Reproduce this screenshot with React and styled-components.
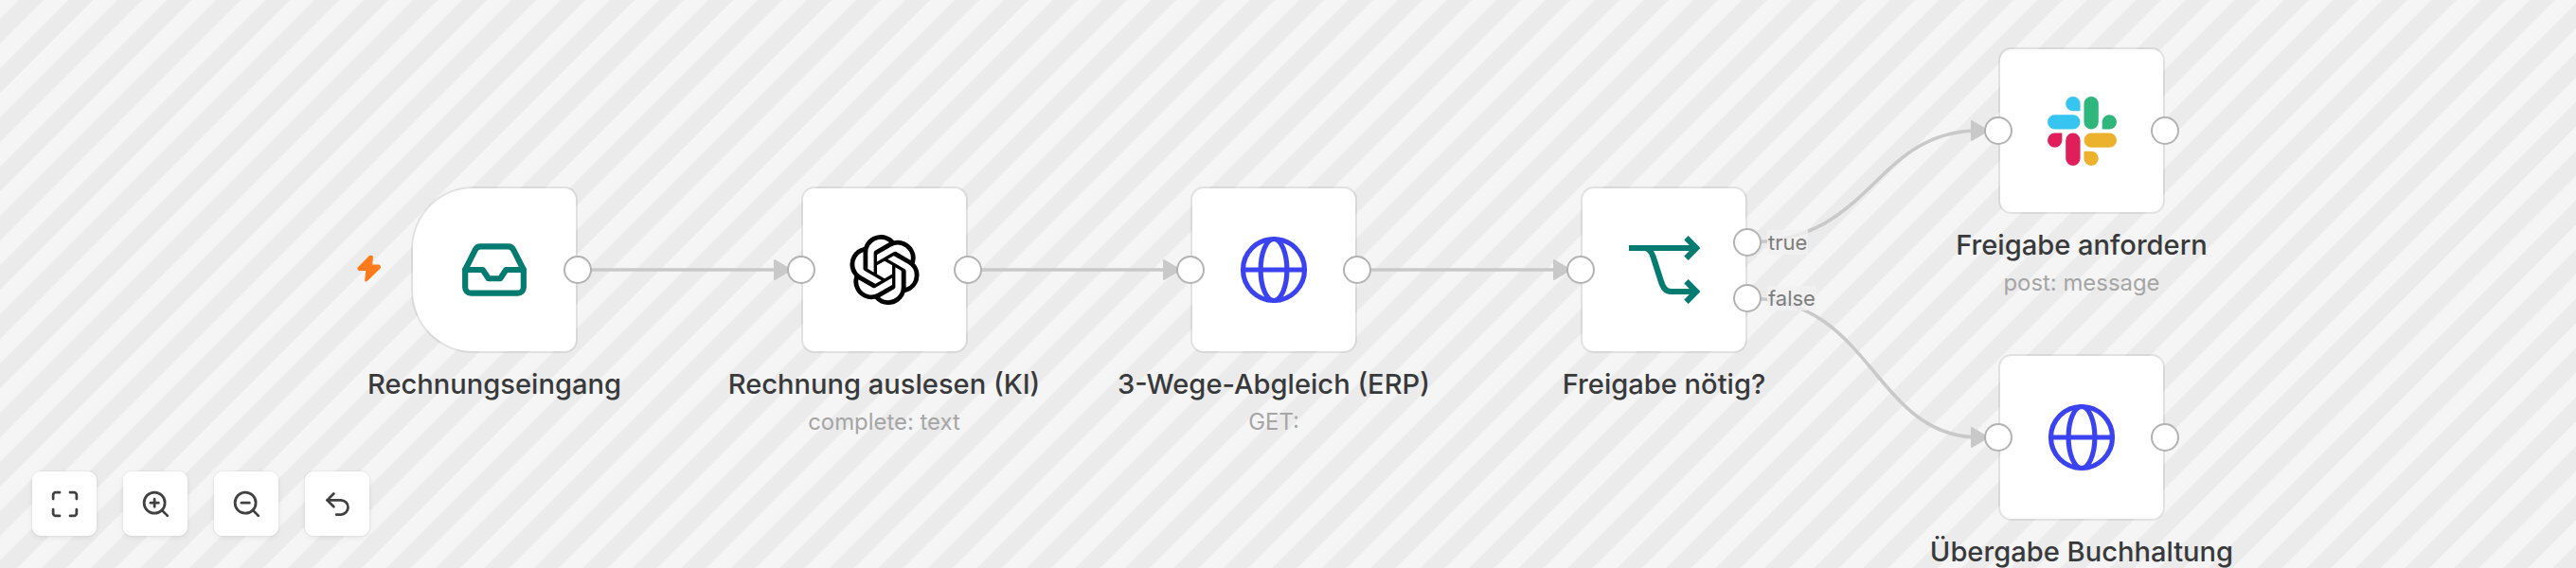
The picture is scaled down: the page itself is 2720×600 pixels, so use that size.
import React from "react";
import styled, { createGlobalStyle } from "styled-components";
import { SiOpenai } from "react-icons/si";
import { Maximize, ZoomIn, ZoomOut, Undo2, Inbox } from "lucide-react";

const GlobalStyle = createGlobalStyle`
  * { box-sizing: border-box; }
  body {
    margin: 0;
    font-family: Inter, "Liberation Sans", sans-serif;
    overflow: hidden;
  }
`;

const Canvas = styled.div`
  position: relative;
  width: 2720px;
  height: 600px;
  overflow: hidden;
  display: flex;
  align-items: flex-end;
  background: #f5f5f5;
`;

const Stripes = styled.svg`
  position: absolute;
  inset: 0;
  width: 2720px;
  height: 600px;
`;

const NodeBox = styled.div`
  position: absolute;
  left: ${(p) => p.$x}px;
  top: ${(p) => p.$y}px;
  width: 176px;
  height: 176px;
  display: flex;
  align-items: center;
  justify-content: center;
  background: white;
  background-clip: padding-box;
  border: 2px solid rgba(0, 0, 0, 0.08);
  border-radius: ${(p) => (p.$trigger ? "66px 14px 14px 66px" : "14px")};
`;

const Handle = styled.span`
  position: absolute;
  left: ${(p) => (p.$side === "left" ? "-17px" : "159px")};
  top: ${(p) => p.$y - 17}px;
  width: 30px;
  height: 30px;
  border: 2px solid #b2b2b2;
  border-radius: 50%;
  background: white;
`;

const Caption = styled.div`
  position: absolute;
  top: 189.5px;
  left: 50%;
  transform: translateX(-50%);
  display: flex;
  flex-direction: column;
  align-items: center;
  gap: 9px;
  white-space: nowrap;
`;

const Title = styled.div`
  font-size: 29.1px;
  line-height: 34px;
  font-weight: 500;
  color: #38393b;
`;

const Subtitle = styled.div`
  font-size: 23.9px;
  line-height: 28px;
  color: #a5a5a5;
`;

const Bolt = styled.svg`
  position: absolute;
  left: -60px;
  top: 69px;
  width: 30px;
  height: 34px;
`;

const OutputLabel = styled.span`
  position: absolute;
  left: 195px;
  top: ${(p) => p.$y - 15}px;
  padding: 0 1px;
  font-size: 22px;
  line-height: 26px;
  color: #7d7d7d;
  background: rgba(241, 241, 241, 0.8);
`;

const Toolbar = styled.div`
  position: relative;
  display: flex;
  gap: 26px;
  padding: 0 0 33px 33px;
`;

const ToolButton = styled.button`
  width: 70px;
  height: 70px;
  padding: 0;
  display: flex;
  align-items: center;
  justify-content: center;
  color: #404040;
  background: white;
  background-clip: padding-box;
  border: 1px solid rgba(0, 0, 0, 0.03);
  border-radius: 10px;
  box-shadow: 0 2px 5px rgba(0, 0, 0, 0.05);
`;

const GlobeIcon = () => (
  <svg width="72" height="72" viewBox="0 0 72 72" fill="none" stroke="#3b43f0" strokeWidth="5.2">
    <circle cx="36" cy="36" r="32.5" />
    <ellipse cx="36" cy="36" rx="13.9" ry="32.5" />
    <path d="M4 36h64" />
  </svg>
);

const BranchIcon = () => (
  <svg width="76" height="74" viewBox="0 0 76 74" fill="none" stroke="#047b70" strokeWidth="6.2">
    <path d="M1 14h71M61.5 3.3l10.7 10.7-10.7 10.7M16 14c6 0 8.5 3 10.5 9l8 25c2.5 8 5 12 11 12H72M61.5 49.3l10.7 10.7-10.7 10.7" />
  </svg>
);

const SlackIcon = () => (
  <svg width="73" height="73" viewBox="0 0 24 24">
    <path fill="#e01e5a" d="M5.042 15.165a2.528 2.528 0 0 1-2.52 2.523A2.528 2.528 0 0 1 0 15.165a2.527 2.527 0 0 1 2.522-2.52h2.52v2.52zM6.313 15.165a2.527 2.527 0 0 1 2.521-2.52 2.527 2.527 0 0 1 2.521 2.52v6.313A2.528 2.528 0 0 1 8.834 24a2.528 2.528 0 0 1-2.521-2.522v-6.313z" />
    <path fill="#36c5f0" d="M8.834 5.042a2.528 2.528 0 0 1-2.521-2.52A2.528 2.528 0 0 1 8.834 0a2.528 2.528 0 0 1 2.521 2.522v2.52H8.834zM8.834 6.313a2.528 2.528 0 0 1 2.521 2.521 2.528 2.528 0 0 1-2.521 2.521H2.522A2.528 2.528 0 0 1 0 8.834a2.528 2.528 0 0 1 2.522-2.521h6.312z" />
    <path fill="#2eb67d" d="M18.956 8.834a2.528 2.528 0 0 1 2.522-2.521A2.528 2.528 0 0 1 24 8.834a2.528 2.528 0 0 1-2.522 2.521h-2.522V8.834zM17.688 8.834a2.528 2.528 0 0 1-2.523 2.521 2.527 2.527 0 0 1-2.52-2.521V2.522A2.527 2.527 0 0 1 15.165 0a2.528 2.528 0 0 1 2.523 2.522v6.312z" />
    <path fill="#ecb22e" d="M15.165 18.956a2.528 2.528 0 0 1 2.523 2.522A2.528 2.528 0 0 1 15.165 24a2.527 2.527 0 0 1-2.52-2.522v-2.522h2.52zM15.165 17.688a2.527 2.527 0 0 1-2.52-2.523 2.526 2.526 0 0 1 2.52-2.52h6.313A2.527 2.527 0 0 1 24 15.165a2.528 2.528 0 0 1-2.522 2.523h-6.313z" />
  </svg>
);

const InboxIcon = () => <Inbox size={74} color="#047b70" strokeWidth={2} />;
const OpenAiIcon = () => <SiOpenai size={74} color="#000" />;

const nodes = [
  { x: 434, y: 197, title: "Rechnungseingang", Icon: InboxIcon, trigger: true, outputs: [{ y: 88 }] },
  { x: 845.5, y: 197, title: "Rechnung auslesen (KI)", subtitle: "complete: text", Icon: OpenAiIcon, outputs: [{ y: 88 }] },
  { x: 1257, y: 197, title: "3-Wege-Abgleich (ERP)", subtitle: "GET:", Icon: GlobeIcon, outputs: [{ y: 88 }] },
  { x: 1669, y: 197, title: "Freigabe nötig?", Icon: BranchIcon, outputs: [{ y: 59, label: "true" }, { y: 118, label: "false" }] },
  { x: 2110, y: 50, title: "Freigabe anfordern", subtitle: "post: message", Icon: SlackIcon, outputs: [{ y: 88 }] },
  { x: 2110, y: 374, title: "Übergabe Buchhaltung", Icon: GlobeIcon, outputs: [{ y: 88 }] },
];

const edges = [
  "M610 285H822",
  "M1022 285H1233",
  "M1434 285H1645",
  "M1845 256C1978 256 1978 138 2090 138",
  "M1845 315C1978 315 1978 462 2090 462",
];

// arrow tips end underneath the input handles
const tips = [[835, 285], [1246, 285], [1658, 285], [2099, 138], [2099, 462]];

const tools = [Maximize, ZoomIn, ZoomOut, Undo2];

function App() {
  return (
    <Canvas>
      <GlobalStyle />
      <Stripes>
        <defs>
          <pattern id="stripes" width="36.76" height="36.76" patternUnits="userSpaceOnUse" patternTransform="rotate(-45)">
            <rect width="36.76" height="36.76" fill="#f5f5f5" />
            <rect y="14.3" width="36.76" height="18.4" fill="#ebebeb" />
          </pattern>
        </defs>
        <rect width="2720" height="600" fill="url(#stripes)" />
        {edges.map((d) => (
          <path key={d} d={d} fill="none" stroke="#c9c9c9" strokeWidth="3.6" />
        ))}
        {tips.map(([x, y]) => (
          <path key={x + "-" + y} d={`M${x - 17} ${y - 10}L${x} ${y}L${x - 17} ${y + 10}Z`} fill="#c9c9c9" stroke="#c9c9c9" strokeWidth="2" strokeLinejoin="round" />
        ))}
      </Stripes>

      {nodes.map(({ x, y, title, subtitle, Icon, trigger, outputs }) => (
        <NodeBox key={title} $x={x} $y={y} $trigger={trigger}>
          {trigger && (
            <Bolt viewBox="0 0 30 34">
              <path d="M14.8 3.2L2.8 15.5L3.4 16.5H12L10.6 28L24.5 14.5L24 13H15.5L16.5 3.5Z" fill="#ff7a1a" stroke="#ff7a1a" strokeWidth="3" strokeLinejoin="round" />
            </Bolt>
          )}
          <Icon />
          {!trigger && <Handle $side="left" $y={88} />}
          {outputs.map((out) => (
            <React.Fragment key={out.y}>
              <Handle $side="right" $y={out.y} />
              {out.label && <OutputLabel $y={out.y}>{out.label}</OutputLabel>}
            </React.Fragment>
          ))}
          <Caption>
            <Title>{title}</Title>
            {subtitle && <Subtitle>{subtitle}</Subtitle>}
          </Caption>
        </NodeBox>
      ))}

      <Toolbar>
        {tools.map((Tool, index) => (
          <ToolButton key={index}>
            <Tool size={33} strokeWidth={2} />
          </ToolButton>
        ))}
      </Toolbar>
    </Canvas>
  );
}

export default App;
